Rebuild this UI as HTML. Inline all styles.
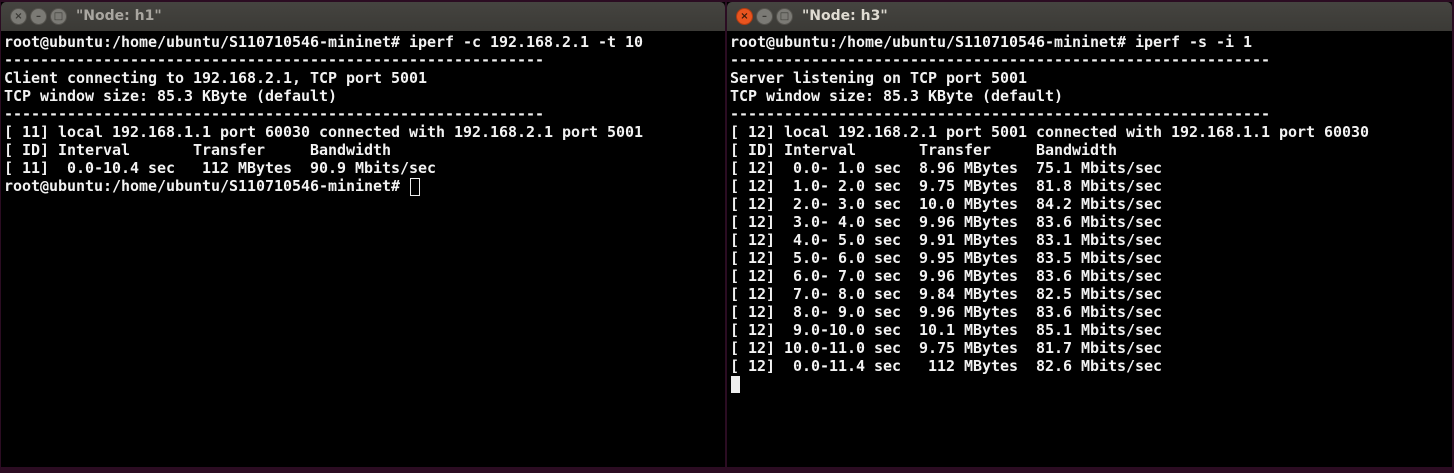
<!DOCTYPE html>
<html><head><style>
html,body{margin:0;padding:0;width:1454px;height:473px;overflow:hidden;background:#2b0c22;}
.win{position:absolute;top:2px;width:724px;height:465px;background:#000;}
.tb{position:absolute;left:0;top:0;right:0;height:29px;background:linear-gradient(#454440,#3b3a36);border-radius:5px 5px 0 0;}
.tb .t{position:absolute;left:75px;top:6px;font:bold 14px "DejaVu Sans","Liberation Sans",sans-serif;color:#dfdbd2;}
.b{position:absolute;top:6px;width:17px;height:17px;border-radius:50%;background:#7b7a75;border:1px solid #55534e;box-sizing:border-box;font:bold 10px "DejaVu Sans",sans-serif;color:#3a3935;text-align:center;line-height:15px;}
.ina .t{color:#a9a6a0;}
pre{position:absolute;left:3px;top:31px;margin:0;font:bold 15px/18px "DejaVu Sans Mono","Liberation Mono",monospace;color:#f2f2f2;letter-spacing:-0.03px;}
</style></head><body>
<div class="win" style="left:1px">
<div class="tb ina"><div class="b" style="left:9px">×</div><div class="b" style="left:29px">–</div><div class="b" style="left:49px">□</div><div class="t">"Node: h1"</div></div>
<pre>root@ubuntu:/home/ubuntu/S110710546-mininet# iperf -c 192.168.2.1 -t 10
------------------------------------------------------------
Client connecting to 192.168.2.1, TCP port 5001
TCP window size: 85.3 KByte (default)
------------------------------------------------------------
[ 11] local 192.168.1.1 port 60030 connected with 192.168.2.1 port 5001
[ ID] Interval       Transfer     Bandwidth
[ 11]  0.0-10.4 sec   112 MBytes  90.9 Mbits/sec
root@ubuntu:/home/ubuntu/S110710546-mininet# </pre>
<div style="position:absolute;left:409px;top:176px;width:8px;height:16px;border:1px solid #eee"></div>
</div>
<div class="win" style="left:727px;width:725px">
<div class="tb"><div class="b" style="left:9px;background:#e9541f;border-color:#b03c12;color:#3a1a0a">×</div><div class="b" style="left:29px">–</div><div class="b" style="left:49px">□</div><div class="t">"Node: h3"</div></div>
<pre>root@ubuntu:/home/ubuntu/S110710546-mininet# iperf -s -i 1
------------------------------------------------------------
Server listening on TCP port 5001
TCP window size: 85.3 KByte (default)
------------------------------------------------------------
[ 12] local 192.168.2.1 port 5001 connected with 192.168.1.1 port 60030
[ ID] Interval       Transfer     Bandwidth
[ 12]  0.0- 1.0 sec  8.96 MBytes  75.1 Mbits/sec
[ 12]  1.0- 2.0 sec  9.75 MBytes  81.8 Mbits/sec
[ 12]  2.0- 3.0 sec  10.0 MBytes  84.2 Mbits/sec
[ 12]  3.0- 4.0 sec  9.96 MBytes  83.6 Mbits/sec
[ 12]  4.0- 5.0 sec  9.91 MBytes  83.1 Mbits/sec
[ 12]  5.0- 6.0 sec  9.95 MBytes  83.5 Mbits/sec
[ 12]  6.0- 7.0 sec  9.96 MBytes  83.6 Mbits/sec
[ 12]  7.0- 8.0 sec  9.84 MBytes  82.5 Mbits/sec
[ 12]  8.0- 9.0 sec  9.96 MBytes  83.6 Mbits/sec
[ 12]  9.0-10.0 sec  10.1 MBytes  85.1 Mbits/sec
[ 12] 10.0-11.0 sec  9.75 MBytes  81.7 Mbits/sec
[ 12]  0.0-11.4 sec   112 MBytes  82.6 Mbits/sec</pre>
<div style="position:absolute;left:4px;top:374px;width:9px;height:17px;background:#eee"></div>
</div>
</body></html>
